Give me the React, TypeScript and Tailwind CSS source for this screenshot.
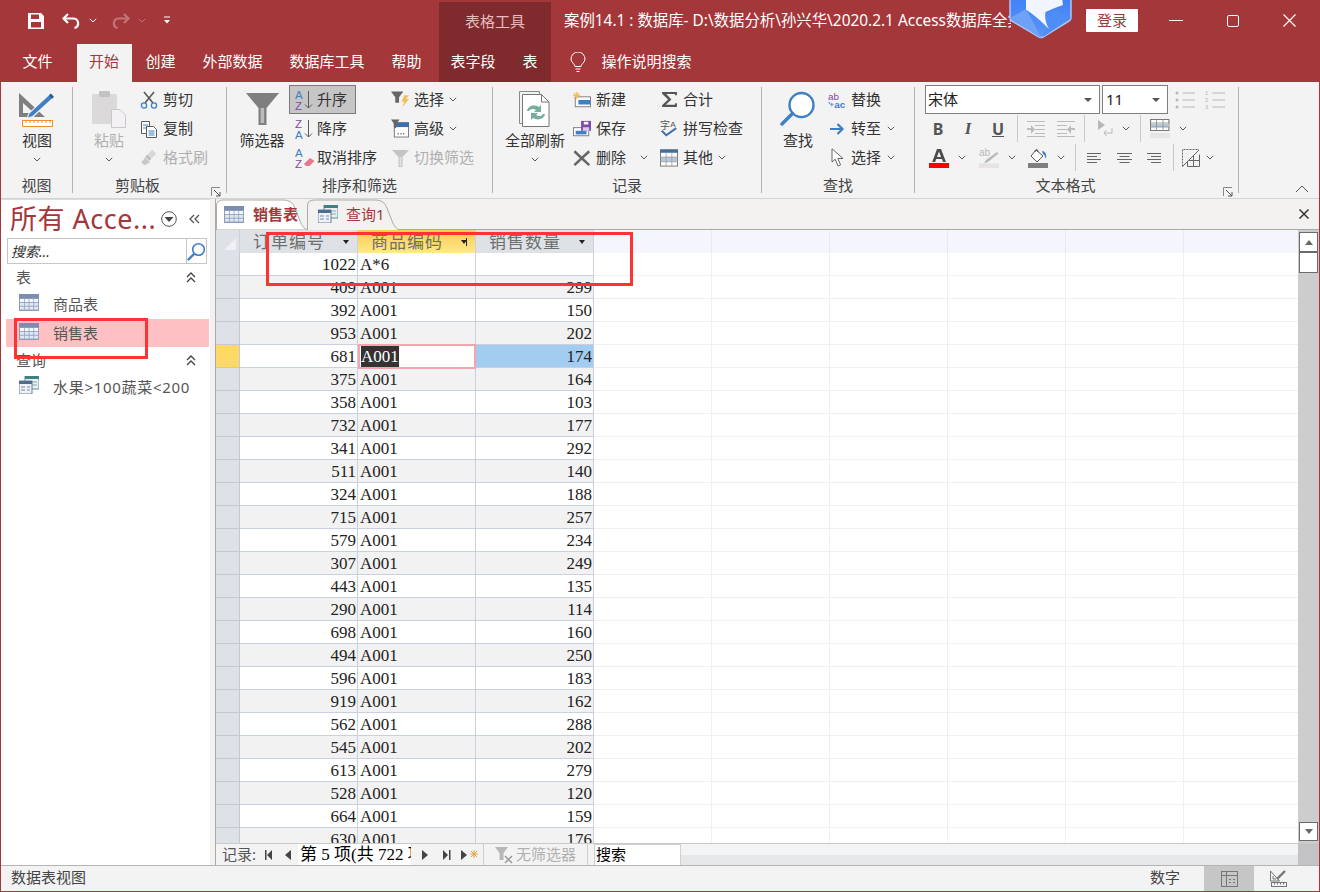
import type { ReactNode } from 'react';

type IconProps = { className?: string };

const rows = [
  ['409', '299'], ['392', '150'], ['953', '202'], ['681', '174'], ['375', '164'], ['358', '103'],
  ['732', '177'], ['341', '292'], ['511', '140'], ['324', '188'], ['715', '257'], ['579', '234'],
  ['307', '249'], ['443', '135'], ['290', '114'], ['698', '160'], ['494', '250'], ['596', '183'],
  ['919', '162'], ['562', '288'], ['545', '202'], ['613', '279'], ['528', '120'], ['664', '159'],
  ['630', '176'],
];

const emptyCols = [0, 1, 2, 3, 4, 5];

function Chevron({ className = '' }: IconProps) {
  return (
    <svg width="8" height="5" viewBox="0 0 8 5" className={className} fill="none" stroke="#5a5a5a" strokeWidth="1">
      <path d="M.8.8 4 4 7.2.8" />
    </svg>
  );
}

function TableIcon() {
  return (
    <svg width="20" height="17" viewBox="0 0 20 17">
      <rect width="20" height="17" fill="#8c9cbc" />
      <rect x="0" y="0" width="20" height="4" fill="#7c8db0" />
      {[0, 1, 2].map((r) =>
        [0, 1, 2, 3].map((c) => (
          <rect key={`${r}-${c}`} x={1 + c * 4.7} y={5 + r * 3.8} width="4" height="3" fill={r === 0 ? '#f4f7fc' : '#dfe7f3'} />
        )),
      )}
    </svg>
  );
}

function QueryIcon() {
  return (
    <svg width="20" height="18" viewBox="0 0 20 18">
      <rect x="6" y="0" width="14" height="13" fill="#e8f0f0" stroke="#5f8f96" />
      <rect x="6" y="0" width="14" height="3" fill="#3f7f86" />
      <path d="M9 6h9M9 9h9" stroke="#8ea6b5" />
      <rect x="0" y="5" width="13" height="13" fill="#eef1f6" stroke="#6d7f99" />
      <rect x="0" y="5" width="13" height="3" fill="#4f6b8f" />
      <path d="M2 11h4M8 11h3M2 14h4M8 14h3" stroke="#7a8ba5" />
    </svg>
  );
}

function ViewIcon() {
  return (
    <svg width="38" height="38" viewBox="0 0 38 38">
      <path fillRule="evenodd" fill="#7f7f7f" d="M1 3 27 27H1ZM5 13V23H16Z" />
      <path d="M32.500 2.500 37 7 15 27.500l-7 2 2.500-6.500Z" fill="#f3f3f3" />
      <path d="M32.500 4 35.500 7 14.500 26l-4.500 1.500 1.500-4Z" fill="#3f7fc4" />
      <path d="M32.800 3.500 36 6.700l-2 2-3.200-3.200Z" fill="#2f5f9a" />
      <rect x="4.500" y="30.500" width="30" height="6" fill="#fff" stroke="#e8912d" />
      <path d="M8 31v2M12 31v2M16 31v2M20 31v2M24 31v2M28 31v2M32 31v2" stroke="#e8912d" />
    </svg>
  );
}

function PasteIcon() {
  return (
    <svg width="36" height="38" viewBox="0 0 36 38">
      <rect x="1" y="4" width="25" height="30" rx="1.5" fill="#dbd9da" />
      <rect x="8" y="1" width="11" height="6" rx="1" fill="#c4c2c3" />
      <path d="M20.5 19.5H29l5.5 5.5v12.5h-14Z" fill="#f3f1f3" stroke="#c9c7c9" />
    </svg>
  );
}

function CutIcon() {
  return (
    <svg width="18" height="18" viewBox="0 0 18 18" fill="none">
      <path d="M4 1 13 12M14 1 5 12" stroke="#5a5a5a" strokeWidth="1.6" />
      <circle cx="4" cy="14.5" r="2.6" stroke="#3f7fc4" strokeWidth="1.3" />
      <circle cx="14" cy="14.5" r="2.6" stroke="#3f7fc4" strokeWidth="1.3" />
    </svg>
  );
}

function CopyIcon() {
  return (
    <svg width="18" height="18" viewBox="0 0 18 18">
      <path d="M1.5 1.5h8v12h-8Z" fill="#fff" stroke="#5a5a5a" />
      <path d="M3 5h5M3 8h3" stroke="#3f7fc4" />
      <path d="M6.5 6.5h7l3 3v8h-10Z" fill="#fff" stroke="#5a5a5a" />
      <path d="M8.5 11h6M8.5 13h6M8.5 15h6" stroke="#3f7fc4" />
    </svg>
  );
}

function BrushIcon() {
  return (
    <svg width="18" height="18" viewBox="0 0 18 18">
      <path d="M1 13c2-1 3-3 4-5l5 5c-2 1-4 3-6 3Z" fill="#c8c6c8" />
      <path d="M7 6l5-5c1 0 4 3 4 4l-5 5Z" fill="#d8d6d8" />
      <path d="M5.5 7.5l1.5-1.5 4 4-1.5 1.5Z" fill="#b5b3b5" />
    </svg>
  );
}

function FunnelBig() {
  return (
    <svg width="33" height="33" viewBox="0 0 33 33">
      <path d="M0 1h33L20.5 16v17h-8V16Z" fill="#7f7f7f" />
      <path d="M14.6 16v15h3.5V16Z" fill="#bcbcbc" />
    </svg>
  );
}

function SortIcon({ first, second, firstFill, secondFill, eraser }: { first: string; second: string; firstFill: string; secondFill: string; eraser?: boolean }) {
  return (
    <svg width="20" height="20" viewBox="0 0 20 20">
      <text x="0" y="9" fontSize="11.5" fontFamily="Liberation Sans" fill={firstFill}>{first}</text>
      <text x="0" y="19.500" fontSize="11.5" fontFamily="Liberation Sans" fill={secondFill}>{second}</text>
      {eraser ? (
        <path d="M9 16l6-6 4.5 3-5 5H11Z" fill="#e8788a" />
      ) : (
        <path d="M13.500 1v17M10 14.500l3.500 3.500 3.500-3.500" fill="none" stroke="#5a5a5a" />
      )}
    </svg>
  );
}

function FilterBolt() {
  return (
    <svg width="19" height="19" viewBox="0 0 19 19">
      <path d="M0 1h13L8.5 7v6h-4V7Z" fill="#666" />
      <path d="M14 5h5l-3 4h3l-7 9 2-6h-3Z" fill="#f0c060" />
    </svg>
  );
}

function AdvancedIcon() {
  return (
    <svg width="19" height="19" viewBox="0 0 19 19">
      <rect x="3.5" y="3.5" width="15" height="15" fill="#fff" stroke="#777" />
      <rect x="3" y="3" width="16" height="5" fill="#3f6fa8" />
      <path d="M7 15h1M10 15h1M13 15h1" stroke="#444" strokeWidth="1.5" />
      <path d="M0 0h9L5.5 5v4h-2V5Z" fill="#666" />
    </svg>
  );
}

function FilterGray() {
  return (
    <svg width="17" height="18" viewBox="0 0 17 18">
      <path d="M0 1h17L10.5 8v10h-4V8Z" fill="#c4c4c4" />
      <path d="M7.6 8v9h1.8V8Z" fill="#e4e4e4" />
    </svg>
  );
}

function RefreshIcon() {
  return (
    <svg width="32" height="38" viewBox="0 0 32 38">
      <path d="M.5 1.500h20l.5 32H.5Z" fill="#f3f3f3" stroke="#8a8a8a" />
      <path d="M3.500 4.500h19l7.500 7.500v24.500H3.500Z" fill="#fff" stroke="#777" />
      <path d="M22.500 4.500v7.500h7.500" fill="none" stroke="#777" />
      <path d="M8 21c1-5 7-7 12-4l2-2v7h-7l2-2c-3-2-6-1-7 1Z" fill="#76ae9a" />
      <path d="M26 24c-1 5-7 7-12 4l-2 2v-7h7l-2 2c3 2 6 1 7-1Z" fill="#76ae9a" />
    </svg>
  );
}

function NewIcon() {
  return (
    <svg width="20" height="18" viewBox="0 0 20 18">
      <rect x="2.500" y="5.500" width="17" height="11" fill="#fff" stroke="#777" />
      <rect x="6" y="9" width="13" height="5" fill="#3f7fc4" />
      <path d="M4 0v8M0 4h8M1 1l6 6M7 1 1 7" stroke="#f0c060" strokeWidth="1.300" />
    </svg>
  );
}

function SaveRecIcon() {
  return (
    <svg width="20" height="18" viewBox="0 0 20 18">
      <rect x=".5" y="7.500" width="17" height="9" fill="#fff" stroke="#777" />
      <rect x="3" y="11" width="12" height="4" fill="#3f7fc4" />
      <rect x="9" y="0" width="11" height="11" fill="#7c4aa8" />
      <rect x="12" y="1" width="5" height="3" fill="#fff" />
      <rect x="11" y="7" width="7" height="4" fill="#d8c8e8" />
    </svg>
  );
}

function DeleteIcon() {
  return (
    <svg width="20" height="18" viewBox="0 0 20 18" fill="none">
      <path d="M1.500 1.500 18 17M18 1.500 1.500 17" stroke="#666" strokeWidth="2.800" />
    </svg>
  );
}

function SigmaIcon() {
  return (
    <svg width="17" height="17" viewBox="0 0 16 16">
      <path d="M1 1h14v3h-1.500L13 2.800H5L9.800 8 4.500 13H13l.5-1.500H15V15H1v-1.500L6.700 8 1 2.500Z" fill="#555" />
    </svg>
  );
}

function SpellIcon() {
  return (
    <svg width="20" height="20" viewBox="0 0 20 20">
      <text x="0" y="10" fontSize="11" fontFamily="Noto Sans CJK SC" fill="#555">字</text>
      <text x="11.500" y="8" fontSize="9" fontFamily="Liberation Sans" fill="#555">A</text>
      <path d="M2 12l5 5 11-8" fill="none" stroke="#3f6fa8" strokeWidth="2.200" />
    </svg>
  );
}

function MoreIcon() {
  return (
    <svg width="19" height="18" viewBox="0 0 19 18">
      <rect x=".5" y=".5" width="18" height="17" fill="#fff" stroke="#777" />
      <rect x="0" y="0" width="19" height="3.500" fill="#3f6f9a" />
      <rect x="1" y="8" width="17" height="5" fill="#b5c9de" />
      <path d="M0 8h19M0 13h19M6.500 3v15M12.500 3v15" stroke="#9a9a9a" strokeWidth=".8" />
    </svg>
  );
}

function FindIcon() {
  return (
    <svg width="36" height="36" viewBox="0 0 36 36" fill="none">
      <circle cx="21.500" cy="14" r="12" fill="#fff" stroke="#3f7fc4" strokeWidth="2.400" />
      <path d="M12.500 22.500 2 33" stroke="#3f7fc4" strokeWidth="3.400" strokeLinecap="round" />
    </svg>
  );
}

function ReplaceIcon() {
  return (
    <svg width="20" height="18" viewBox="0 0 20 18">
      <text x="0" y="9" fontSize="11" fontFamily="Liberation Sans" fill="#7c4aa8">ab</text>
      <text x="7" y="17.500" fontSize="11" fontFamily="Liberation Sans" fontWeight="700" fill="#3f7fc4">ac</text>
      <path d="M1 11c0 2 1 3 4 3M3.500 12l2 2-2 2" fill="none" stroke="#3f7fc4" />
    </svg>
  );
}

function ArrowIcon() {
  return (
    <svg width="16" height="14" viewBox="0 0 16 14" fill="none">
      <path d="M1 7h12M8.500 2 13.500 7l-5 5" stroke="#3f7fc4" strokeWidth="2.200" />
    </svg>
  );
}

function PointerIcon() {
  return (
    <svg width="13" height="19" viewBox="0 0 13 19">
      <path d="M1 .8V14l3.200-2.800L7 18l2.600-1.100-2.800-6.400H12Z" fill="#fff" stroke="#666" />
    </svg>
  );
}

function ListIcon({ numbered }: IconProps & { numbered?: boolean }) {
  return (
    <svg width="20" height="18" viewBox="0 0 20 18">
      {[2, 9, 16].map((y, i) =>
        numbered ? (
          <text key={y} x="0" y={y + 2} fontSize="5.500" fontFamily="Liberation Sans" fill="#b0b0b0">{i + 1}</text>
        ) : (
          <circle key={y} cx="2" cy={y} r="1.500" fill="#b8b8b8" />
        ),
      )}
      <path d="M7.500 2H20M7.500 9H20M7.500 16H20" stroke="#b8b8b8" />
    </svg>
  );
}

function IndentIcon({ flip }: { flip?: boolean }) {
  return (
    <svg width="18" height="16" viewBox="0 0 18 16" className={flip ? '-scale-x-100' : ''}>
      <path d="M0 .5h18M8 4.500h10M8 8.500h10M8 12.500h10M0 15.500h18" stroke="#bcbcbc" />
      <path d="M0 7h4V4l4 4.500-4 4.500V9H0Z" fill="#bcbcbc" />
    </svg>
  );
}

function RtlIcon() {
  return (
    <svg width="15" height="18" viewBox="0 0 15 18">
      <path d="M0 0l7 5-7 5Z" fill="#b8b8b8" />
      <path d="M14 8v5H6M8.500 10 6 13l2.500 3" fill="none" stroke="#b8b8b8" />
    </svg>
  );
}

function GridlineIcon() {
  return (
    <svg width="20" height="19" viewBox="0 0 20 19">
      <rect x=".5" y=".5" width="17" height="11" transform="scale(1.080 1)" fill="#fff" stroke="#777" />
      <rect x="1" y="5" width="18" height="3" fill="#b5c9de" />
      <path d="M6.500 0v12M13 0v12M0 4h19M0 8h19" stroke="#888" strokeWidth=".8" />
      <rect x="0" y="14" width="20" height="5" fill="#e6e6e6" />
    </svg>
  );
}

function FontColorIcon() {
  return (
    <svg width="20" height="20" viewBox="0 0 20 20">
      <path d="M8 1h4l5 13h-3l-1-3H7.200l-1 3h-3ZM8 9h4l-2-5.500Z" fill="#4d4d4d" fillRule="evenodd" />
      <rect y="15" width="20" height="5" fill="#f00" />
    </svg>
  );
}

function HighlightIcon() {
  return (
    <svg width="20" height="20" viewBox="0 0 20 20">
      <text x="0" y="8" fontSize="10" fontFamily="Liberation Sans" fill="#b8b8b8">ab</text>
      <path d="M18 4l1.500 1.500L9 14l-4 1.500L7 12Z" fill="#b8b8b8" />
      <rect y="15.500" width="20" height="4.500" fill="#e6e2e6" />
    </svg>
  );
}

function BucketIcon() {
  return (
    <svg width="20" height="20" viewBox="0 0 20 20">
      <path d="M8 2l7 6-6 6-6-6Z" fill="#fff" stroke="#555" />
      <path d="M7 4c0-3 3-4 3 0" fill="none" stroke="#555" />
      <path d="M14 3c3 0 5 3 4 8-1-2-1-4-3-5Z" fill="#3f7fc4" />
      <rect y="15" width="20" height="5" fill="#7f7f7f" />
    </svg>
  );
}

function AlignIcon({ kind }: { kind: 'left' | 'center' | 'right' }) {
  const d = {
    left: 'M0 .5h14M0 3.500h10M0 6.500h14M0 9.500h10',
    center: 'M0 .5h15M2.500 3.500h10M0 6.500h15M2.500 9.500h10',
    right: 'M0 .5h14M4 3.500h10M0 6.500h14M4 9.500h10',
  }[kind];
  return (
    <svg width="15" height="10" viewBox="0 0 15 10">
      <path d={d} stroke="#666" />
    </svg>
  );
}

function AltFillIcon() {
  return (
    <svg width="18" height="18" viewBox="0 0 18 18">
      <path d="M.5 17.500V.5h16.500" fill="none" stroke="#666" strokeDasharray="2 1" />
      <path d="M.5 17.500 17 1" stroke="#666" />
      <path d="M17.500 5.500V17.500H5.500M11.500 6.500V17.500M6 11.500H17.500" fill="none" stroke="#666" />
      <path d="M5.500 13V17.500" stroke="#666" />
    </svg>
  );
}

function Launcher() {
  return (
    <svg width="10" height="10" viewBox="0 0 10 10" className="absolute right-[5px] bottom-[1px]">
      <path d="M.5 9V.5H9" fill="none" stroke="#888" />
      <path d="M3 3l6 6M5 9h4V5" fill="none" stroke="#555" />
    </svg>
  );
}

function DatasheetStatusIcon() {
  return (
    <svg width="17" height="16" viewBox="0 0 17 16" fill="none" stroke="#777">
      <rect x=".5" y=".5" width="16" height="15" />
      <path d="M0 4.500h17M5.500 0v16M8 8.500h2M12 8.500h2M8 11.500h2M12 11.500h2" />
    </svg>
  );
}

function DesignStatusIcon() {
  return (
    <svg width="17" height="17" viewBox="0 0 17 17" fill="none" stroke="#777">
      <path d="M.5 1v10h9ZM3 6v3h3" />
      <path d="M15 1 7 9" strokeWidth="2.400" />
      <rect x="1.500" y="12.500" width="15" height="4" />
      <path d="M4.500 13v1.500M7.500 13v1.500M10.500 13v1.500M13.500 13v1.500" />
    </svg>
  );
}

function RibbonSep() {
  return <div className="my-[5px] w-px shrink-0 bg-[#b4b4b4]" />;
}

function RibbonGroup({ label, width, labelClass = '', launcher, children }: { label: string; width: string; labelClass?: string; launcher?: boolean; children: ReactNode }) {
  return (
    <div className={`relative flex shrink-0 flex-col pt-[3px] ${width}`}>
      <div className="flex h-[87px]">{children}</div>
      <div className={`mt-[2px] text-center text-[15px] leading-[22px] text-[#444] ${labelClass}`}>{label}</div>
      {launcher && <Launcher />}
    </div>
  );
}

function LargeButton({ icon, label, className = '', muted, chevron = true, iconBox = 'pt-[2px]' }: { icon: ReactNode; label: string; className?: string; muted?: boolean; chevron?: boolean; iconBox?: string }) {
  return (
    <div className={`flex shrink-0 flex-col items-center ${className}`}>
      <div className={`flex h-[44px] items-start justify-center ${iconBox}`}>{icon}</div>
      <div className={`text-[15px] leading-[22px] whitespace-nowrap ${muted ? 'text-[#b0b0b0]' : 'text-[#333]'}`}>{label}</div>
      {chevron && <Chevron className="mt-[6px]" />}
    </div>
  );
}

function SmallButton({ icon, label, muted, chevron, chevronGap = 'ml-[5px]' }: { icon: ReactNode; label: string; muted?: boolean; chevron?: boolean; chevronGap?: string }) {
  return (
    <div className="flex h-[29px] items-center">
      <div className="flex w-[18px] shrink-0 justify-center">{icon}</div>
      <span className={`ml-[5px] text-[15px] whitespace-nowrap ${muted ? 'text-[#b0b0b0]' : 'text-[#333]'}`}>{label}</span>
      {chevron && <Chevron className={chevronGap} />}
    </div>
  );
}

function MiniSep() {
  return <div className="h-[27px] w-px shrink-0 bg-[#c8c8c8]" />;
}

function Ribbon() {
  return (
    <div className="flex h-[116px] bg-[#f3f3f3]">
      <RibbonGroup label="视图" width="w-[71px]">
        <LargeButton icon={<ViewIcon />} label="视图" className="ml-[17px] w-[38px]" iconBox="pt-[5px]" />
      </RibbonGroup>
      <RibbonSep />
      <RibbonGroup label="剪贴板" width="w-[153px]" labelClass="pr-[24px]" launcher>
        <LargeButton icon={<PasteIcon />} label="粘贴" muted className="ml-[5px] w-[62px]" iconBox="pt-[5px]" />
        <div className="flex flex-col">
          <SmallButton icon={<CutIcon />} label="剪切" />
          <SmallButton icon={<CopyIcon />} label="复制" />
          <SmallButton icon={<BrushIcon />} label="格式刷" muted />
        </div>
      </RibbonGroup>
      <RibbonSep />
      <RibbonGroup label="排序和筛选" width="w-[265px]">
        <LargeButton icon={<FunnelBig />} label="筛选器" chevron={false} className="ml-[8px] w-[54px]" iconBox="pt-[7px]" />
        <div className="flex w-[101px] shrink-0 flex-col">
          <div className="flex h-[29px] w-[67px] items-center border border-[#7a7a7a] bg-[#c6c6c6] pl-[5px]">
            <SortIcon first="A" second="Z" firstFill="#3f7fc4" secondFill="#7c4aa8" />
            <span className="ml-[2px] text-[15px] text-[#333]">升序</span>
          </div>
          <div className="flex h-[29px] items-center pl-[6px]">
            <SortIcon first="Z" second="A" firstFill="#7c4aa8" secondFill="#3f7fc4" />
            <span className="ml-[2px] text-[15px] text-[#333]">降序</span>
          </div>
          <div className="flex h-[29px] items-center pl-[6px]">
            <SortIcon first="A" second="Z" firstFill="#3f7fc4" secondFill="#7c4aa8" eraser />
            <span className="ml-[2px] text-[15px] whitespace-nowrap text-[#333]">取消排序</span>
          </div>
        </div>
        <div className="flex flex-col pl-[1px]">
          <SmallButton icon={<FilterBolt />} label="选择" chevron />
          <SmallButton icon={<AdvancedIcon />} label="高级" chevron />
          <SmallButton icon={<FilterGray />} label="切换筛选" muted />
        </div>
      </RibbonGroup>
      <RibbonSep />
      <RibbonGroup label="记录" width="w-[268px]">
        <LargeButton icon={<RefreshIcon />} label="全部刷新" className="ml-[9px] w-[66px]" iconBox="pt-[5px]" />
        <div className="flex w-[92px] shrink-0 flex-col pl-[5px]">
          <SmallButton icon={<NewIcon />} label="新建" />
          <SmallButton icon={<SaveRecIcon />} label="保存" />
          <SmallButton icon={<DeleteIcon />} label="删除" chevron chevronGap="ml-[14px]" />
        </div>
        <div className="flex flex-col">
          <SmallButton icon={<SigmaIcon />} label="合计" />
          <SmallButton icon={<SpellIcon />} label="拼写检查" />
          <SmallButton icon={<MoreIcon />} label="其他" chevron />
        </div>
      </RibbonGroup>
      <RibbonSep />
      <RibbonGroup label="查找" width="w-[152px]">
        <LargeButton icon={<FindIcon />} label="查找" chevron={false} className="ml-[10px] w-[52px]" iconBox="pt-[6px]" />
        <div className="ml-[4px] flex flex-col">
          <SmallButton icon={<ReplaceIcon />} label="替换" />
          <SmallButton icon={<ArrowIcon />} label="转至" chevron chevronGap="ml-[6px]" />
          <SmallButton icon={<PointerIcon />} label="选择" chevron chevronGap="ml-[6px]" />
        </div>
      </RibbonGroup>
      <RibbonSep />
      <RibbonGroup label="文本格式" width="w-[323px]" labelClass="pr-[22px]" launcher>
        <div className="ml-[10px] flex flex-col">
          <div className="flex h-[29px] items-center">
            <div className="flex h-[29px] w-[175px] items-center justify-between border border-[#7f7f7f] bg-white pr-[7px] pl-[2px] text-[15px] text-[#222]">
              宋体
              <span className="h-0 w-0 border-x-[4px] border-t-[4px] border-x-transparent border-t-[#555]" />
            </div>
            <div className="ml-[2px] flex h-[29px] w-[66px] items-center justify-between border border-[#7f7f7f] bg-white pr-[7px] pl-[3px] text-[15px] text-[#222]">
              11
              <span className="h-0 w-0 border-x-[4px] border-t-[4px] border-x-transparent border-t-[#555]" />
            </div>
            <div className="ml-[7px]"><ListIcon /></div>
            <div className="ml-[10px]"><ListIcon numbered /></div>
          </div>
          <div className="-ml-[2px] flex h-[29px] items-center">
            <div className="flex w-[30px] justify-center text-[16px] font-bold text-[#555]">B</div>
            <div className="flex w-[30px] justify-center font-['Liberation_Serif'] text-[17px] font-bold text-[#555] italic">I</div>
            <div className="flex w-[30px] justify-center text-[16px] font-bold text-[#555] underline">U</div>
            <div className="ml-[4px]"><MiniSep /></div>
            <div className="ml-[9px]"><IndentIcon /></div>
            <div className="ml-[12px]"><IndentIcon flip /></div>
            <div className="ml-[9px]"><MiniSep /></div>
            <div className="ml-[13px]"><RtlIcon /></div>
            <Chevron className="ml-[9px]" />
            <div className="ml-[10px]"><MiniSep /></div>
            <div className="ml-[9px]"><GridlineIcon /></div>
            <Chevron className="ml-[9px]" />
          </div>
          <div className="flex h-[29px] items-center pl-[4px]">
            <FontColorIcon />
            <Chevron className="ml-[9px]" />
            <div className="ml-[13px]"><HighlightIcon /></div>
            <Chevron className="ml-[9px]" />
            <div className="ml-[12px]"><BucketIcon /></div>
            <Chevron className="ml-[9px]" />
            <div className="ml-[10px]"><MiniSep /></div>
            <div className="ml-[11px]"><AlignIcon kind="left" /></div>
            <div className="ml-[15px]"><AlignIcon kind="center" /></div>
            <div className="ml-[15px]"><AlignIcon kind="right" /></div>
            <div className="ml-[11px]"><MiniSep /></div>
            <div className="ml-[8px]"><AltFillIcon /></div>
            <Chevron className="ml-[6px]" />
          </div>
        </div>
      </RibbonGroup>
      <RibbonSep />
      <div className="flex flex-1 items-end justify-end pr-[10px] pb-[5px]">
        <svg width="14" height="8" viewBox="0 0 14 8" fill="none" stroke="#555">
          <path d="M1 7 7 1l6 6" />
        </svg>
      </div>
    </div>
  );
}

function TitleBar() {
  return (
    <div className="flex h-[41px] text-white">
      <div className="flex w-[438px] shrink-0 items-center">
        <svg width="16" height="16" viewBox="0 0 16 16" className="ml-[27px]">
          <path fillRule="evenodd" fill="#fff" d="M0 0h13l3 3v13H0ZM3 1.500V6h8V1.500ZM3 9v5.500h10V9Z" />
        </svg>
        <svg width="19" height="16" viewBox="0 0 19 16" fill="none" stroke="#fff" strokeWidth="2.200" className="ml-[18px]">
          <path d="M6 1 1.500 5.500 6 10M2 5.500h9c6 0 7 8 1.500 9.500" />
        </svg>
        <Chevron className="ml-[8px] [&_path]:stroke-white" />
        <svg width="19" height="16" viewBox="0 0 19 16" fill="none" stroke="#c17578" strokeWidth="2.200" className="ml-[14px]">
          <path d="M13 1l4.500 4.500L13 10M17 5.500H8c-6 0-7 8-1.500 9.500" />
        </svg>
        <Chevron className="ml-[8px] opacity-30 [&_path]:stroke-white" />
        <svg width="8" height="9" viewBox="0 0 8 9" className="ml-[17px]">
          <path d="M1 1h6" stroke="#fff" />
          <path d="M1 4h6L4 7.500Z" fill="#fff" />
        </svg>
      </div>
      <div className="mt-[2px] flex w-[112px] shrink-0 justify-center bg-[#7f2a2d] pt-[9px] text-[15px] leading-[20px] text-[#e6bcbe]">表格工具</div>
      <div className="ml-[13px] w-[447px] overflow-hidden pt-[10px] text-[15.400px] leading-[21px] whitespace-nowrap">
        案例14.1 : 数据库- D:\数据分析\孙兴华\2020.2.1 Access数据库全集
      </div>
      <div className="ml-[75px] flex h-[23px] w-[52px] shrink-0 translate-y-[9px] items-center justify-center rounded-[1px] bg-white text-[15px] text-[#a4373a]">登录</div>
      <div className="ml-[31px] flex items-center">
        <div className="h-px w-[14px] bg-white" />
        <div className="ml-[44px] h-[12px] w-[12px] rounded-[2px] border border-white" />
        <svg width="13" height="13" viewBox="0 0 13 13" className="ml-[44px]" stroke="#fff" strokeWidth="1.200">
          <path d="M.5.5l12 12M12.500.5l-12 12" />
        </svg>
      </div>
    </div>
  );
}

function MenuTabs() {
  const tab = 'flex items-center text-[15px] text-white whitespace-nowrap';
  return (
    <div className="flex h-[41px]">
      <div className={`${tab} ml-[7.500px] px-[14px]`}>文件</div>
      <div className="mt-[3px] ml-[10px] flex w-[55px] items-center justify-center bg-[#f3f3f3] pb-[3px] text-[15px] text-[#a4373a]">开始</div>
      <div className={`${tab} ml-[14px]`}>创建</div>
      <div className={`${tab} ml-[27px]`}>外部数据</div>
      <div className={`${tab} ml-[27px]`}>数据库工具</div>
      <div className={`${tab} ml-[27px]`}>帮助</div>
      <div className="ml-[17px] flex w-[112px] bg-[#7f2a2d]">
        <div className={`${tab} ml-[12px]`}>表字段</div>
        <div className={`${tab} ml-[27px]`}>表</div>
      </div>
      <svg width="16" height="21" viewBox="0 0 16 21" fill="none" stroke="#fff" className="mt-[11px] ml-[19px]">
        <path d="M5 14.500C5 12 1 10.500 1 7a7 7 0 0 1 14 0c0 3.500-4 5-4 7.500Z" />
        <path d="M5.500 17h5M6.500 19.500h3" />
      </svg>
      <div className={`${tab} ml-[16px]`}>操作说明搜索</div>
    </div>
  );
}

function NavItem({ icon, label, active, labelClass = '' }: { icon: ReactNode; label: string; active?: boolean; labelClass?: string }) {
  return (
    <div className={`ml-[5px] flex h-[28px] w-[203px] items-center pl-[13px] text-[15px] text-[#555] ${active ? 'bg-[#ffc0c4]' : ''}`}>
      <div className="flex w-[34px] shrink-0 -translate-y-[2px]">{icon}</div>
      <span className={`whitespace-nowrap ${labelClass}`}>{label}</span>
    </div>
  );
}

function NavSection({ label }: { label: string }) {
  return (
    <div className="flex h-[26px] items-center justify-between pr-[14px] pl-[15px] text-[15px] text-[#555]">
      {label}
      <svg width="10" height="11" viewBox="0 0 10 11" fill="none" stroke="#444" strokeWidth="1.300">
        <path d="M1 5l4-4 4 4M1 10l4-4 4 4" />
      </svg>
    </div>
  );
}

function NavPane() {
  return (
    <div className="flex w-[209px] shrink-0 flex-col border-t border-[#dcdcdc] bg-white">
      <div className="flex h-[38px] items-center">
        <span className="ml-[9px] w-[150px] text-[27px] leading-[38px] tracking-[0.5px] whitespace-nowrap text-[#a4373a]">所有 Acce...</span>
        <svg width="16" height="16" viewBox="0 0 16 16" className="ml-[1px]" fill="none">
          <circle cx="8" cy="8" r="7.300" stroke="#555" />
          <path d="M3.500 6h9L8 11Z" fill="#444" />
        </svg>
        <svg width="11" height="10" viewBox="0 0 11 10" fill="none" stroke="#555" strokeWidth="1.300" className="ml-[12px]">
          <path d="M5 1 1 5l4 4M10 1 6 5l4 4" />
        </svg>
      </div>
      <div className="ml-[6px] flex h-[26px] w-[200px] items-center border border-[#c6c6c6]">
        <span className="w-[178px] pl-[3px] text-[14px] text-[#333] italic">搜索...</span>
        <div className="flex h-full flex-1 items-center justify-center border-l border-[#c6c6c6]">
          <svg width="19" height="19" viewBox="0 0 19 19" fill="none" stroke="#3f7fc4">
            <circle cx="11.500" cy="7.500" r="5.800" strokeWidth="1.600" />
            <path d="M7 12 1.500 17.500" strokeWidth="2.400" strokeLinecap="round" />
          </svg>
        </div>
      </div>
      <NavSection label="表" />
      <NavItem icon={<TableIcon />} label="商品表" />
      <div className="mt-[1px]"><NavItem icon={<TableIcon />} label="销售表" active /></div>
      <NavSection label="查询" />
      <NavItem icon={<QueryIcon />} label="水果>100蔬菜<200" labelClass="tracking-[0.7px]" />
    </div>
  );
}

function HeaderCell({ label, selected }: { label: string; selected?: boolean }) {
  return (
    <div className={`relative flex h-[23px] w-[118px] shrink-0 justify-center border-r border-[#c9d1e0] pr-[19px] text-[17px] leading-[23px] tracking-[1px] text-[#6e6e6e] ${selected ? 'bg-gradient-to-b from-[#fbc94d] to-[#ffe98a]' : 'bg-[#dee1e6]'}`}>
      <span className="whitespace-nowrap">{label}</span>
      <span className="absolute top-[10px] right-[8px] h-0 w-0 border-x-[3.500px] border-t-[4px] border-x-transparent border-t-[#222]" />
      {selected && <span className="absolute top-[8px] right-[8px] h-[8px] w-px bg-[#222]" />}
    </div>
  );
}

function EmptyCells() {
  return (
    <>
      {emptyCols.map((c) => (
        <div key={c} className="h-full w-[118px] shrink-0 border-r border-b border-[#f0f0f0]" />
      ))}
    </>
  );
}

function DataRow({ id, code, qty, index }: { id: string; code: string; qty: string; index: number }) {
  const active = index === 3;
  const shade = index % 2 === 0 ? 'bg-[#f2f2f2]' : 'bg-white';
  const cell = `h-full w-[118px] shrink-0 overflow-hidden border-r border-b border-[#c9d1e0] text-[17px] leading-[24px] text-[#222] ${shade}`;
  return (
    <div className="flex h-[23px] font-['Liberation_Serif','Noto_Sans_CJK_SC',serif]">
      <div className={`h-full w-[24px] shrink-0 border-r border-b border-[#c3c8d2] ${active ? 'bg-[#ffd965]' : 'bg-[#dee1e6]'}`} />
      <div className={`${cell} pr-[1px] text-right`}>{id}</div>
      {active ? (
        <div className="relative z-10 -mt-px -mb-[2px] flex h-[25px] w-[118px] shrink-0 items-center border-2 border-[#f4a6ac] bg-white pl-[1px] text-[17px] text-white">
          <span className="bg-[#333] leading-[21px]">{code}</span>
        </div>
      ) : (
        <div className={`${cell} pl-[2px]`}>{code}</div>
      )}
      <div className={`${cell} pr-[1px] text-right ${active ? '!bg-[#a3cdf0]' : ''}`}>{qty}</div>
      <EmptyCells />
    </div>
  );
}

function DocumentTabs() {
  return (
    <div className="flex h-[31px] items-end justify-between border-b border-[#a9a9a9] bg-[#f3f2f1]">
      <div className="flex">
        <div className="relative flex h-[30px] w-[92px] items-center pl-[8px]">
          <svg width="92" height="31" viewBox="0 0 92 31" className="absolute top-0 left-0">
            <path d="M.5 31V7Q.5 1 7 1h61q8 0 11 8l5 13q3 8 8 9Z" fill="#fff" stroke="#b5a9a0" />
          </svg>
          <div className="relative flex items-center">
            <TableIcon />
            <span className="ml-[9px] text-[15px] font-bold text-[#a4373a]">销售表</span>
          </div>
        </div>
        <div className="relative -ml-[1px] flex h-[30px] w-[93px] items-center pl-[11px]">
          <svg width="93" height="31" viewBox="0 0 93 31" className="absolute top-0 left-0">
            <path d="M.5 31V7Q.5 1 7 1h62q8 0 11 8l5 13q3 8 8 9" fill="#f3f2f1" stroke="#a9a9a9" />
          </svg>
          <div className="relative flex items-center">
            <QueryIcon />
            <span className="ml-[8px] text-[15px] text-[#a4373a]">查询1</span>
          </div>
        </div>
      </div>
      <svg width="10" height="10" viewBox="0 0 10 10" stroke="#333" strokeWidth="1.500" className="mr-[10px] mb-[10px]">
        <path d="M.5.5l9 9M9.500.5l-9 9" />
      </svg>
    </div>
  );
}

function Datasheet() {
  return (
    <div className="flex min-h-0 flex-1">
      <div className="flex-1 overflow-hidden bg-white">
        <div className="flex h-[23px] bg-[#f5f6fd]">
          <div className="relative h-full w-[24px] shrink-0 border-r border-[#c9d1e0] bg-[#dee1e6]">
            <span className="absolute right-[3px] bottom-[3px] h-0 w-0 border-b-[12px] border-l-[12px] border-b-[#eef0f3] border-l-transparent" />
          </div>
          <HeaderCell label="订单编号" />
          <HeaderCell label="商品编码" selected />
          <HeaderCell label="销售数量" />
          {emptyCols.map((c) => (
            <div key={c} className="h-full w-[118px] shrink-0 border-r border-[#e8e9f2]" />
          ))}
        </div>
        <div className="flex h-[23px] font-['Liberation_Serif','Noto_Sans_CJK_SC',serif]">
          <div className="h-full w-[24px] shrink-0 border-r border-b border-[#c3c8d2] bg-[#dee1e6]" />
          <div className="h-full w-[118px] shrink-0 border-r border-b border-[#c9d1e0] pr-[1px] text-right text-[17px] leading-[24px] text-[#222]">1022</div>
          <div className="h-full w-[118px] shrink-0 border-r border-b border-[#c9d1e0] pl-[2px] text-[17px] leading-[24px] text-[#222]">A*6</div>
          <div className="h-full w-[118px] shrink-0 border-r border-b border-[#c9d1e0]" />
          <EmptyCells />
        </div>
        {rows.map(([id, qty], i) => (
          <DataRow key={`${id}-${i}`} id={id} code="A001" qty={qty} index={i} />
        ))}
      </div>
      <div className="flex w-[21px] shrink-0 flex-col items-center justify-between bg-[#cdcdcd] pt-[2px] pb-[2px]">
        <div className="flex flex-col">
          <div className="flex h-[20px] w-[19px] items-center justify-center border border-[#6b6b6b] bg-white">
            <span className="h-0 w-0 border-x-[4.500px] border-b-[5px] border-x-transparent border-b-[#666]" />
          </div>
          <div className="h-[21px] w-[19px] border border-[#6b6b6b] bg-white" />
        </div>
        <div className="flex h-[19px] w-[19px] items-center justify-center border border-[#6b6b6b] bg-white">
          <span className="h-0 w-0 border-x-[4.500px] border-t-[5px] border-x-transparent border-t-[#666]" />
        </div>
      </div>
    </div>
  );
}

function NavBarArrow({ d }: { d: string }) {
  return (
    <svg width="8" height="10" viewBox="0 0 8 10" fill="#444">
      <path d={d} />
    </svg>
  );
}

function RecordBar() {
  return (
    <div className="flex h-[22px] shrink-0 items-end border-t border-[#c9c9c9] bg-[#f3f3f3] text-[15px]">
      <div className="flex h-full w-[46px] shrink-0 items-center pl-[6px] text-[#555]">记录:</div>
      <div className="flex h-full w-[22px] shrink-0 items-center pl-[3px]"><NavBarArrow d="M0 0h1.500v10H0ZM7 0v10L2 5Z" /></div>
      <div className="flex h-full w-[14px] shrink-0 items-center"><NavBarArrow d="M7 0v10L1 5Z" /></div>
      <div className="h-full w-[113px] shrink-0 overflow-hidden bg-white pl-[2px] font-['Liberation_Serif','Noto_Sans_CJK_SC',serif] text-[17px] leading-[21px] whitespace-nowrap text-black">第 5 项(共 722 项)</div>
      <div className="ml-[10px] flex h-full items-center"><NavBarArrow d="M1 0v10l6-5Z" /></div>
      <div className="ml-[14px] flex h-full items-center"><NavBarArrow d="M0 0v10l5-5ZM6 0h1.500v10H6Z" /></div>
      <div className="ml-[10px] flex h-full items-center"><NavBarArrow d="M0 0v10l6-5Z" /></div>
      <svg width="8" height="8" viewBox="0 0 8 8" stroke="#e6a040" className="mt-auto mb-[7px] ml-[1px]">
        <path d="M4 0v8M0 4h8M1 1l6 6M7 1 1 7" />
      </svg>
      <div className="ml-[5px] h-full w-px bg-[#d0d0d0]" />
      <div className="ml-[11px] flex h-full items-center text-[#b0b0b0]">
        <svg width="18" height="18" viewBox="0 0 18 18">
          <path d="M0 1h13L8.500 7v7h-4V7Z" fill="#b8b8b8" />
          <path d="M10 10l7 7M17 10l-7 7" stroke="#999" strokeWidth="1.500" />
        </svg>
        <span className="ml-[3px] whitespace-nowrap">无筛选器</span>
      </div>
      <div className="ml-[11px] h-full w-px bg-[#d0d0d0]" />
      <div className="ml-[6px] h-full w-[87px] shrink-0 border border-b-0 border-[#d0d0d0] bg-white pl-[1px] font-['Liberation_Serif','Noto_Sans_CJK_SC',serif] text-[15px] leading-[21px] text-black">搜索</div>
      <div className="flex h-full flex-1 flex-col">
        <div className="flex-1 bg-[#f3f4f6]" />
        <div className="h-[10px] bg-[#e6e7e9]" />
      </div>
      <div className="h-full w-[21px] shrink-0 bg-[#c3c3c5]" />
    </div>
  );
}

function StatusBar() {
  return (
    <div className="flex h-[26px] shrink-0 items-center border-t border-[#b5b5b5] bg-[#f3f3f3] text-[15px] text-[#444]">
      <span className="ml-[10px] -translate-y-[1px]">数据表视图</span>
      <span className="ml-auto -translate-y-[1px]">数字</span>
      <div className="ml-[24px] flex h-full w-[50px] items-center justify-center bg-[#c6c6c6]">
        <DatasheetStatusIcon />
      </div>
      <div className="flex w-[49px] justify-center"><DesignStatusIcon /></div>
      <div className="w-[16px]" />
    </div>
  );
}

export default function App() {
  return (
    <div className="relative flex h-[892px] w-[1320px] flex-col overflow-hidden border-x border-b border-[#a4373a] bg-[#a4373a] font-['Noto_Sans','Noto_Sans_CJK_SC',sans-serif]">
      <TitleBar />
      <MenuTabs />
      <Ribbon />
      <div className="h-px bg-[#d4d4d4]" />
      <div className="flex min-h-0 flex-1 bg-[#f3f2f1]">
        <NavPane />
        <div className="ml-[5px] w-px shrink-0 bg-[#a9a9a9]" />
        <div className="flex min-w-0 flex-1 flex-col">
          <DocumentTabs />
          <Datasheet />
          <RecordBar />
        </div>
      </div>
      <StatusBar />

      {/* overlays: logo badge and the red annotation boxes */}
      <svg width="68" height="42" viewBox="0 0 68 42" className="absolute top-0 left-[1005px]">
        <defs>
          <linearGradient id="hex" x1="0" y1="0" x2="0" y2="1">
            <stop offset="0" stopColor="#3f80f8" />
            <stop offset="1" stopColor="#5a94f5" />
          </linearGradient>
        </defs>
        <path d="M4 -6V18Q4 20 6 21L33 37Q35 38 37 37L63 21Q65 20 65 18V-6Z" fill="url(#hex)" stroke="#a9c6f5" strokeWidth="1.500" />
        <path d="M4 18 20 9 35 37Q34 38 33 37Z" fill="#6fa2f7" />
        <path d="M65 18 47 9 37 37Q36 38 37 37Z" fill="#4f8cf6" />
        <path d="M20 -2V9.500Q30 16 43 29Q38 20 39.500 12Q48 8 57 5L56 -2Z" fill="#f0f5ff" />
      </svg>
      <div className="absolute top-[318px] left-[13px] h-[41px] w-[134px] border-[3px] border-[#ff3333]" />
      <div className="absolute top-[232px] left-[265px] h-[54px] w-[367px] border-[3px] border-[#ff3333]" />
    </div>
  );
}
